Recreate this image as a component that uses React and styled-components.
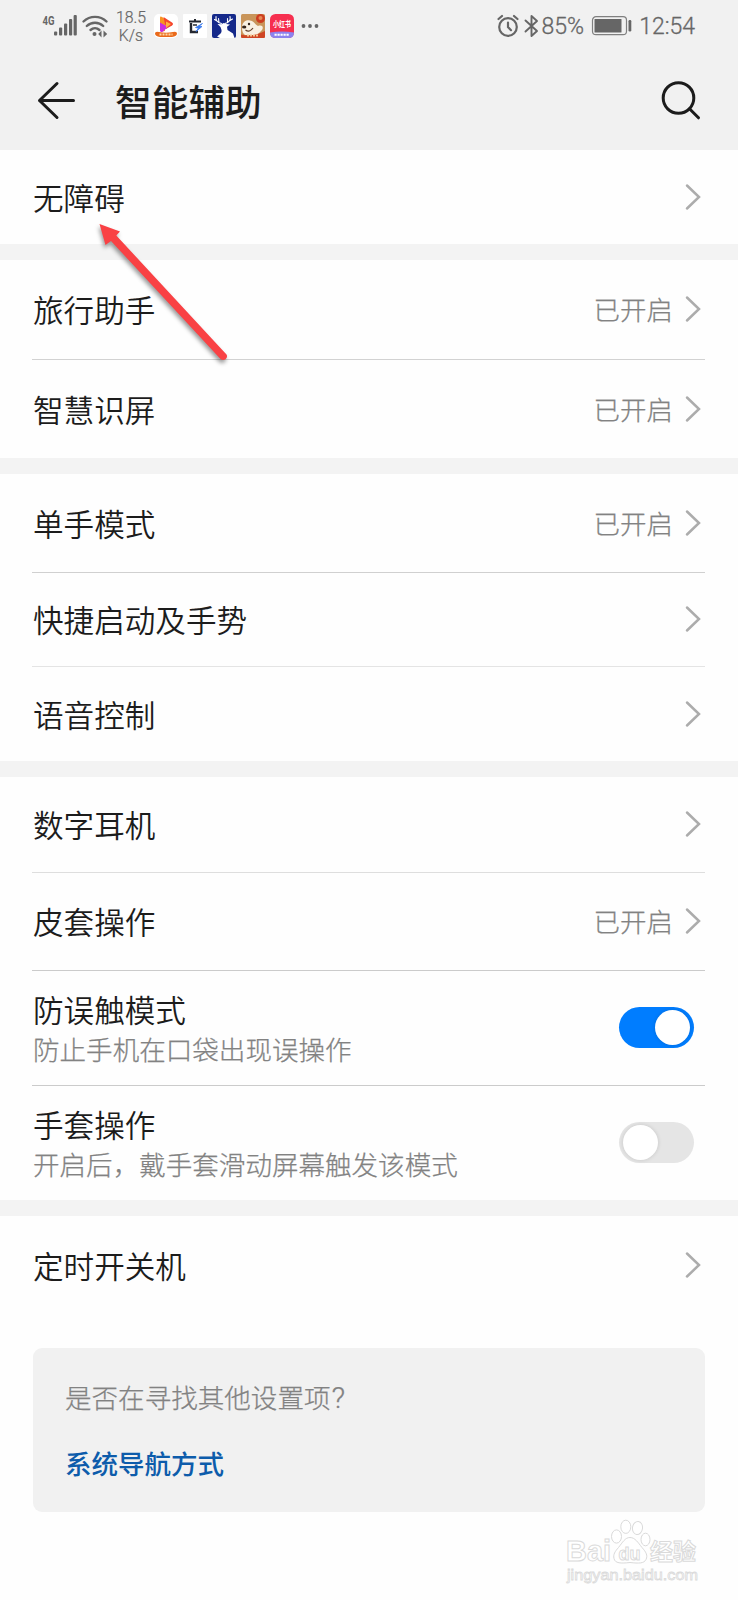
import styled, { createGlobalStyle } from 'styled-components';

const TEXT_COLOR = '#1c1c1c'
const MUTED_COLOR = '#828282'
const STATUS_COLOR = '#666666'
const LINK_COLOR = '#0d5cab'
const CJK_FONT = '"Noto Sans CJK SC", "Noto Sans", sans-serif'

const GlobalStyle = createGlobalStyle`
  * {
    box-sizing: border-box;
  }

  body {
    margin: 0;
    background-color: #fefefe;
    font-family: ${CJK_FONT};
    color: ${TEXT_COLOR};
  }

  svg {
    display: block;
    flex: none;
  }
`

const Screen = styled.div`
  position: relative;
  width: 738px;
  height: 1600px;
  overflow: hidden;
  background-color: #fefefe;
`

const Top = styled.header`
  height: 150px;
  background-color: #f1f1f1;
`

const StatusBar = styled.div`
  display: flex;
  align-items: center;
  justify-content: space-between;
  height: 52px;
  padding: 0 43px 0 41px;
  color: ${STATUS_COLOR};
  font-family: Roboto, sans-serif;
`

const StatusGroup = styled.div`
  display: flex;
  align-items: center;
`

const StatusIcons = styled(StatusGroup)`
  gap: ${props => props.$gap}px;
  margin-right: ${props => props.$after || 0}px;
`

const NetSpeed = styled.div`
  width: 32px;
  margin: 1px 7px 0 6px;
  font-size: 15.8px;
  font-weight: 300;
  line-height: 18px;
  text-align: center;
  -webkit-text-stroke: 0.2px ${STATUS_COLOR};
`

const AppIcons = styled.div`
  display: flex;
  gap: 5px;
  margin-right: 7px;
`

const StatusText = styled.span`
  margin-top: 2px;
  font-size: 23px;
  font-weight: 300;
  line-height: 28px;
  -webkit-text-stroke: 0.3px ${STATUS_COLOR};
`

const TitleBar = styled.div`
  display: flex;
  align-items: center;
  height: 98px;
  padding: 0 36px 0 36px;
`

const Title = styled.h1`
  flex: 1;
  margin: 0 0 2px 39px;
  font-size: 36.7px;
  font-weight: 500;
  line-height: 48px;
`

const IconButton = styled.button`
  padding: 0;
  border: 0;
  background: transparent;
  cursor: pointer;
`

const Section = styled.section`
  padding: 0 33px 0 32px;
  border-bottom: ${props => (props.$last ? 0 : 16)}px solid #f3f3f3;
`

const Row = styled.div`
  display: flex;
  align-items: center;
  height: ${props => props.$height}px;
  padding: 0 3px 1px 1px;
  border-bottom: ${props => (props.$divider ? `1px solid ${props.$divider}` : '0')};
`

const RowText = styled.div`
  flex: 1;
  padding-top: ${props => (props.$withHint ? 2 : 0)}px;
`

const RowTitle = styled.div`
  font-size: 30.6px;
  font-weight: 350;
  line-height: 40px;
`

const RowHint = styled.div`
  font-size: 26.55px;
  font-weight: 300;
  line-height: 40px;
  color: ${MUTED_COLOR};
  -webkit-text-stroke: 0.25px ${MUTED_COLOR};
`

const RowValue = styled.span`
  margin-right: 11px;
  font-size: 26.5px;
  font-weight: 300;
  line-height: 38px;
  color: ${MUTED_COLOR};
  -webkit-text-stroke: 0.25px ${MUTED_COLOR};
`

const Toggle = styled.button`
  display: flex;
  justify-content: ${props => (props.$on ? 'flex-end' : 'flex-start')};
  align-items: center;
  width: 75px;
  height: 41px;
  margin-right: 8px;
  padding: 0 4px;
  border: 0;
  border-radius: 21px;
  background-color: ${props => (props.$on ? '#007dff' : '#e5e5e5')};
  cursor: pointer;
`

const Knob = styled.span`
  width: 35px;
  height: 35px;
  border-radius: 50%;
  background-color: #ffffff;
  box-shadow: 0 0 4px rgba(0, 0, 0, 0.14);
`

const Suggestion = styled.aside`
  height: 164px;
  margin: 33px 33px 0;
  padding: 29px 32px;
  border-radius: 9px;
  background-color: #f1f1f1;
`

const QuestionMark = styled.span`
  margin-left: 1px;
  font-family: Roboto, sans-serif;
  font-size: 30px;
  line-height: 1;
`

const SuggestionLink = styled.a`
  display: block;
  margin-top: 27px;
  font-size: 26.5px;
  font-weight: 500;
  line-height: 38px;
  color: ${LINK_COLOR};
`

const Pointer = styled.svg`
  position: absolute;
  left: 90px;
  top: 215px;
  pointer-events: none;
`

const Watermark = styled.svg`
  position: absolute;
  left: 560px;
  top: 1514px;
`

const SECTIONS = [
  [{ title: '无障碍', height: 94 }],
  [
    { title: '旅行助手', value: '已开启', height: 100, divider: '#d2d2d2' },
    { title: '智慧识屏', value: '已开启', height: 98 },
  ],
  [
    { title: '单手模式', value: '已开启', height: 99, divider: '#d0d0d0' },
    { title: '快捷启动及手势', height: 94, divider: '#e4e4e4' },
    { title: '语音控制', height: 94 },
  ],
  [
    { title: '数字耳机', height: 96, divider: '#dedede' },
    { title: '皮套操作', value: '已开启', height: 98, divider: '#cbcbcb' },
    { title: '防误触模式', hint: '防止手机在口袋出现误操作', on: true, height: 115, divider: '#cbcbcb' },
    { title: '手套操作', hint: '开启后，戴手套滑动屏幕触发该模式', on: false, height: 114 },
  ],
  [{ title: '定时开关机', height: 99 }],
]

function Chevron() {
  return (
    <svg width="18" height="28" viewBox="0 0 18 28" fill="none" stroke="#acacac" strokeWidth="2.5" strokeLinecap="round">
      <path d="M3 2.5 15 14 3 25.5" />
    </svg>
  );
}

function SignalIcon() {
  return (
    <svg width="36" height="28" viewBox="0 0 36 28" fill={STATUS_COLOR}>
      <text x="1.5" y="12.5" fontSize="13.5" fontWeight="700" textLength="12" lengthAdjust="spacingAndGlyphs">4G</text>
      <rect x="13" y="19.5" width="3.2" height="4" rx="1" />
      <rect x="18" y="15.5" width="3.2" height="8" rx="1" />
      <rect x="23" y="11.5" width="3.2" height="12" rx="1" />
      <rect x="28" y="7" width="3.2" height="16.5" rx="1" />
      <rect x="32.6" y="3" width="3.2" height="20.5" rx="1" />
    </svg>
  );
}

function WifiIcon() {
  return (
    <svg width="28" height="26" viewBox="0 0 28 26" fill="none" stroke={STATUS_COLOR} strokeWidth="2.4" strokeLinecap="round">
      <path d="M2.5 8.5a16.5 16.5 0 0 1 23 0M5.8 13a11.8 11.8 0 0 1 16.4 0M9.5 17a6.8 6.8 0 0 1 9 0" />
      <circle cx="13.5" cy="21" r="2" fill={STATUS_COLOR} stroke="none" />
      <path d="m20.5 17.5-3.3 3.5 3.3 3.5zM22.5 17.5l3.7 3.5-3.7 3.5z" fill={STATUS_COLOR} stroke="none" />
    </svg>
  );
}

function VideoApp() {
  return (
    <svg width="24" height="24" viewBox="0 0 24 24">
      <rect width="24" height="24" rx="5" fill="#fff" />
      <path d="M6 3.5Q6 2 8 3l3 2v12l-3 .5Q6 17.5 6 15z" fill="#f89222" />
      <path d="M9.5 3 18 8.5Q20 10 18 11.5L12 15z" fill="#f5442e" />
      <path d="M6 8.5 14 13l-5 4.5Q6 19 6 16z" fill="#c92ce0" />
      <path d="M12 7.5 17 10 12 14z" fill="#ffb13c" />
      <path d="M1 19.5Q1 17 5 18q7 1.5 14 0 4-1 4 1.5T18 23H6Q1 22 1 19.5z" fill="#ea6a1b" />
      <path d="M5.5 20.5h13" stroke="#ffd9a8" strokeWidth="2" strokeDasharray="2 1" />
    </svg>
  );
}

function ToolApp() {
  return (
    <svg width="24" height="24" viewBox="0 0 24 24" fill="none" stroke="#252830">
      <rect width="24" height="24" rx="1" fill="#fff" stroke="none" />
      <path d="M6 7.5h12M12 5v3" strokeWidth="2" />
      <path d="M8 9v9h7" strokeWidth="2.4" />
      <path d="M10 11h4" strokeWidth="1.5" />
      <path d="m19.5 9.5-7 4 3 .7-2.5 3.3 6-5-2.8-.5z" fill="#3779ed" stroke="#3779ed" strokeWidth=".8" />
    </svg>
  );
}

function DeerApp() {
  return (
    <svg width="24" height="24" viewBox="0 0 24 24">
      <rect width="24" height="24" rx="2" fill="#15298a" />
      <g fill="none" stroke="#fff" strokeLinecap="round" strokeWidth="1.1">
        <path d="M9.5 9.5C5 8.5 3.5 6 4 2.5M5 7 2.5 5.5M7 8.5 6.5 4.5M13 9.5c4-1 6-3.5 5-7M17 7 20.5 5M15.5 8.5V4.5" />
      </g>
      <path d="m5.5 10 4 .2L11.5 9l2.5 1 4 .5-3 2.3.5 3.2 5.5 3.5 1.5 4.5H8c-2-.5-2-1.500-3-1.500C8 20 10 19 9.500 16L8.500 13z" fill="#fff" />
    </svg>
  );
}

function DogApp() {
  return (
    <svg width="24" height="24" viewBox="0 0 24 24">
      <rect width="24" height="24" rx="1.5" fill="#c9955a" />
      <circle cx="19.5" cy="4.5" r="4.500" fill="#cd3d20" />
      <circle cx="19.5" cy="4" r="2" fill="#e88a55" />
      <path d="M1 14C1 8 5 5.500 9 6.500c4 .5 5 4 8 5.500 4-1.500 6 1 4 4l-5 5H4Q1 19 1 14z" fill="#f8f0e2" />
      <circle cx="8" cy="10" r="1.2" fill="#33231a" />
      <ellipse cx="3.2" cy="13" rx="2.2" ry="1.6" fill="#33231a" />
      <path d="M4.5 16q4 3 7.500-2" fill="none" stroke="#65402c" strokeWidth="1.2" />
      <path d="M0 20.500q12 3 24-3.500v5.500q0 1.500-1.500 1.500h-21Q0 24 0 22.500z" fill="#cf4523" />
      <path d="M6 21.500h11" stroke="#f5c795" strokeWidth="1.8" strokeDasharray="2 1" />
    </svg>
  );
}

function RedApp() {
  return (
    <svg width="24" height="24" viewBox="0 0 24 24" overflow="visible">
      <rect width="24" height="24" rx="5.5" fill="#f62f4f" />
      <text x="3" y="13.2" fontFamily={CJK_FONT} fontSize="7.8" fontWeight="700" fill="#fff" textLength="18" lengthAdjust="spacingAndGlyphs">小红书</text>
      <path d="M0 18.5q12-2 24 0Q24 24 18.5 24h-13Q0 24 0 18.5z" fill="#8c83ef" />
      <path d="M4.5 20.7h15" stroke="#fff" strokeWidth="2" strokeDasharray="2.2 .8" />
    </svg>
  );
}

function AlarmIcon() {
  return (
    <svg width="22" height="24" viewBox="0 0 22 24" fill="none" stroke={STATUS_COLOR} strokeWidth="2.2" strokeLinecap="round">
      <circle cx="11" cy="13" r="8.8" />
      <path d="M11 8.5V13l3 3.2M1.5 5 5 2M20.5 5 17 2" />
    </svg>
  );
}

function BluetoothIcon() {
  return (
    <svg width="15" height="24" viewBox="0 0 15 24" fill="none" stroke={STATUS_COLOR} strokeWidth="1.9" strokeLinejoin="round" strokeLinecap="round">
      <path d="M1.5 6.5 13 17l-5.500 5V2L13 7 1.500 17.500" />
    </svg>
  );
}

function BatteryIcon() {
  return (
    <svg width="42" height="22" viewBox="0 0 42 22">
      <rect x="1.5" y="1.7" width="34" height="18" rx="3.5" fill="none" stroke="#808080" strokeWidth="1.2" />
      <rect x="3.5" y="4" width="27" height="13.5" rx=".5" fill={STATUS_COLOR} />
      <rect x="37.5" y="5" width="2.8" height="11.5" rx="1.2" fill={STATUS_COLOR} />
    </svg>
  );
}

function SettingRow({ item }) {
  const isToggle = item.on !== undefined;

  return (
    <Row $height={item.height} $divider={item.divider}>
      <RowText $withHint={Boolean(item.hint)}>
        <RowTitle>{item.title}</RowTitle>
        {item.hint && <RowHint>{item.hint}</RowHint>}
      </RowText>
      {item.value && <RowValue>{item.value}</RowValue>}
      {isToggle ? (
        <Toggle $on={item.on} role="switch" aria-checked={item.on}>
          <Knob />
        </Toggle>
      ) : (
        <Chevron />
      )}
    </Row>
  );
}

export default function App() {
  return (
    <Screen>
      <GlobalStyle />
      <Top>
        <StatusBar>
          <StatusGroup>
            <StatusIcons $gap={4}>
              <SignalIcon />
              <WifiIcon />
            </StatusIcons>
            <NetSpeed>18.5<br />K/s</NetSpeed>
            <AppIcons>
              <VideoApp />
              <ToolApp />
              <DeerApp />
              <DogApp />
              <RedApp />
            </AppIcons>
            <svg width="18" height="6" viewBox="0 0 18 6" fill={STATUS_COLOR}>
              <circle cx="2.5" cy="3" r="1.9" />
              <circle cx="9" cy="3" r="1.9" />
              <circle cx="15.5" cy="3" r="1.9" />
            </svg>
          </StatusGroup>
          <StatusGroup>
            <StatusIcons $gap={5} $after={3}>
              <AlarmIcon />
              <BluetoothIcon />
            </StatusIcons>
            <StatusText>85%</StatusText>
            <StatusIcons $gap={0} $after={6}>
              <svg width="7" height="1" />
              <BatteryIcon />
            </StatusIcons>
            <StatusText>12:54</StatusText>
          </StatusGroup>
        </StatusBar>
        <TitleBar>
          <IconButton>
            <svg width="40" height="40" viewBox="0 0 40 40" fill="none" stroke={TEXT_COLOR} strokeWidth="3" strokeLinecap="round" strokeLinejoin="round">
              <path d="M37.500 19.500H3.500M21 2.500 3.500 19.500 21 36.500" />
            </svg>
          </IconButton>
          <Title>智能辅助</Title>
          <IconButton>
            <svg width="42" height="42" viewBox="0 0 42 42" fill="none" stroke={TEXT_COLOR} strokeWidth="3" strokeLinecap="round">
              <circle cx="18.5" cy="18" r="15.3" />
              <path d="m29.5 28.8 9 9" />
            </svg>
          </IconButton>
        </TitleBar>
      </Top>

      {SECTIONS.map((items, index) => (
        <Section key={index} $last={index === SECTIONS.length - 1}>
          {items.map(item => (
            <SettingRow key={item.title} item={item} />
          ))}
        </Section>
      ))}

      <Suggestion>
        <RowHint>是否在寻找其他设置项<QuestionMark>?</QuestionMark></RowHint>
        <SuggestionLink>系统导航方式</SuggestionLink>
      </Suggestion>

      <Pointer width="150" height="155" viewBox="0 0 150 155">
        <g style={{ filter: 'drop-shadow(-1px 3px 2px rgba(0, 0, 0, 0.4))' }} fill="#f94144">
          <path d="M9.5 9 30 16.5 26.3 20.5 136.5 139.5Q138 142 135.5 144.3 133 146 130.5 144L21 26 15.5 30z" />
        </g>
      </Pointer>

      <Watermark width="150" height="76" viewBox="0 0 150 76" fill="#fff" stroke="#dadada" strokeWidth="1">
        <text x="6" y="46.5" fontFamily="Liberation Sans, sans-serif" fontSize="30" fontWeight="700" textLength="45" lengthAdjust="spacingAndGlyphs">Bai</text>
        <ellipse cx="56.5" cy="22.5" rx="5" ry="6.6" />
        <ellipse cx="65.8" cy="12.8" rx="5" ry="6.6" />
        <ellipse cx="77.5" cy="14" rx="5" ry="6.6" transform="rotate(8 77.5 14)" />
        <ellipse cx="85.5" cy="25.5" rx="4.5" ry="6.3" />
        <path d="M70 23.5c5 0 8 5 12 10 4 4.5 6 8 4 12-2 4-7 4-16 3-9 1-15 1-16-4-1-4 1-7 4.5-11 4-5 6.500-10 11.500-10z" />
        <text x="58.5" y="45.5" fontFamily="Liberation Sans, sans-serif" fontSize="19" fontWeight="700" textLength="22" lengthAdjust="spacingAndGlyphs">du</text>
        <text x="90" y="45.5" fontSize="23" fontWeight="700">经验</text>
        <text x="7" y="66" fontFamily="Liberation Sans, sans-serif" fontSize="15.5" strokeWidth=".8" textLength="131" lengthAdjust="spacingAndGlyphs">jingyan.baidu.com</text>
      </Watermark>
    </Screen>
  );
}
